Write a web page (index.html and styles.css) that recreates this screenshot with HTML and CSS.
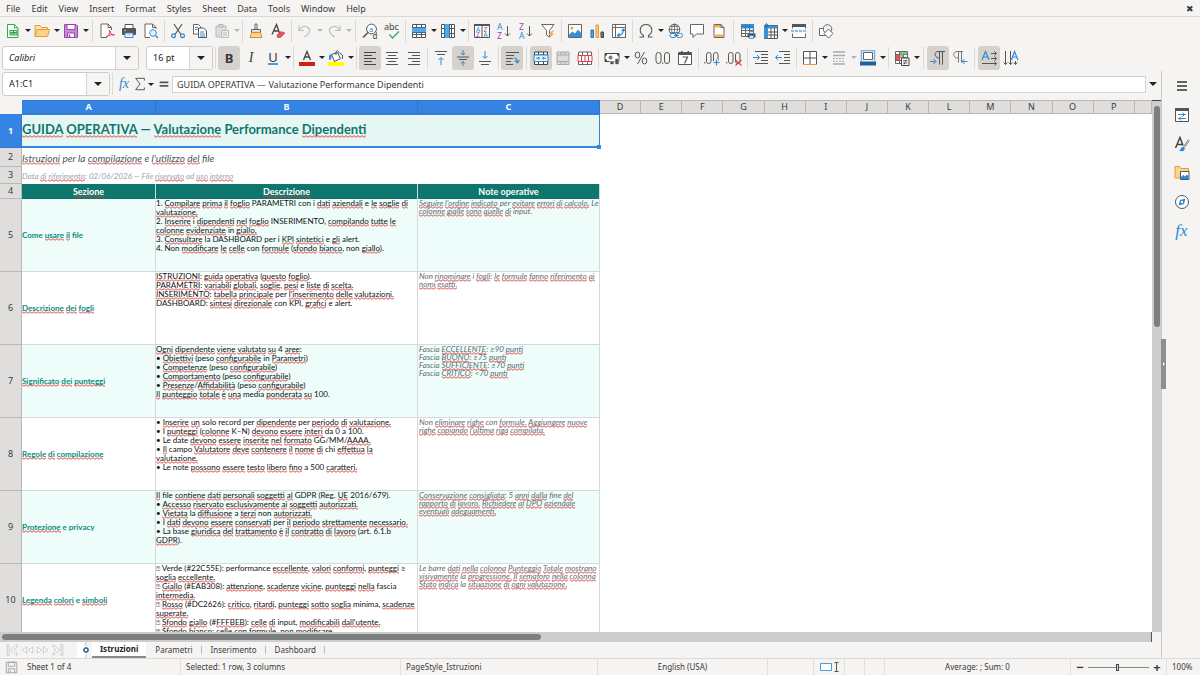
FILE: index.html
```
<!DOCTYPE html>
<html lang="it">
<head>
<meta charset="utf-8">
<title>Valutazione Performance Dipendenti</title>
<link rel="stylesheet" href="styles.css">
</head>
<body>
<svg class="sprite" aria-hidden="true">
  <symbol id="new" viewBox="0 0 16 16"><path d="M2.500 1.500h7l3.500 3.500v9.500h-10.500z" fill="#fff" stroke="#36a852"/><path d="M9.500 1.500v3.500h3.500" fill="none" stroke="#36a852"/><path d="M4.500 7h8v5.500h-8z" fill="#36a852"/><path d="M5.500 8.500h2.500M9 8.500h2.500M5.500 11h2.500M9 11h2.500" stroke="#c8efd0"/></symbol>
  <symbol id="open" viewBox="0 0 16 16"><path d="M1 13.500v-11h5l1.500 2h6v2" fill="#fbe3b5" stroke="#e89a35"/><path d="M1 13.500l2-7h12.500l-2 7z" fill="#fad38e" stroke="#e89a35"/></symbol>
  <symbol id="save" viewBox="0 0 16 16"><path d="M1.500 1.500h11.500l1.500 1.500v11.500h-13z" fill="#c98adb" stroke="#9b45b5"/><path d="M4 1.500h8v5h-8z" fill="#fff" stroke="#9b45b5"/><path d="M4.500 14.500v-4.500h7v4.500z" fill="#fff" stroke="#9b45b5"/><path d="M6.500 11.500v3" stroke="#9b45b5" stroke-width="1.500"/></symbol>
  <symbol id="pdf" viewBox="0 0 16 16"><path d="M12.500 7v-2.500l-3.500-3.500h-7v13.500h6" fill="#fff" stroke="#666"/><path d="M9 1v3.500h3.500" fill="none" stroke="#666"/><path d="M7 14c3-1 4-4 3.500-6-.5-1.500 0-1.500.5 0 .5 2.500 2 4.500 4.500 4-2-1-6 0-8 2z" fill="none" stroke="#d8434e"/></symbol>
  <symbol id="print" viewBox="0 0 16 16"><path d="M4 1.500h8v4h-8z" fill="#fff" stroke="#555"/><rect x="1" y="5" width="14" height="7" rx="1" fill="#555"/><path d="M4 10h8v4.500h-8z" fill="#fff" stroke="#3b82c4"/><path d="M3 7.500h2M5.500 12h5" stroke="#9bc7ec"/></symbol>
  <symbol id="preview" viewBox="0 0 16 16"><path d="M13 6v-1.500l-3.500-3.500h-7.500v13.500h5" fill="#fff" stroke="#666"/><path d="M9.500 1v3.500h3.500" fill="none" stroke="#666"/><circle cx="10" cy="10" r="3.300" fill="#e6f2fb" stroke="#3b8fd4"/><path d="M12.500 12.500l2.500 2.500" stroke="#3b8fd4" stroke-width="1.500"/></symbol>
  <symbol id="cut" viewBox="0 0 16 16"><path d="M4 1l7 10.500M12 1l-7 10.500" stroke="#555" stroke-width="1.200"/><circle cx="3.500" cy="12.800" r="1.900" fill="none" stroke="#2f88d0" stroke-width="1.200"/><circle cx="12.500" cy="12.800" r="1.900" fill="none" stroke="#2f88d0" stroke-width="1.200"/></symbol>
  <symbol id="copy" viewBox="0 0 16 16"><path d="M1.500 1.500h5l2 2v7.500h-7z" fill="#fff" stroke="#666"/><path d="M6.500 5h5l3 3v6.500h-8z" fill="#fff" stroke="#555"/><path d="M3 4.500h3M3 6.500h2.500M8 9h4M8 11h5M8 13h5" stroke="#3b8fd4"/></symbol>
  <symbol id="paste" viewBox="0 0 16 16"><path d="M2 3h10v11h-10z" fill="#ddd" stroke="#bbb"/><path d="M5 1.500h4v2.500h-4z" fill="#eee" stroke="#aaa"/><path d="M7.500 7.500h7v7h-7z" fill="#eee" stroke="#bbb"/><path d="M9 10h4M9 12h4" stroke="#bbb"/></symbol>
  <symbol id="clone" viewBox="0 0 16 16"><path d="M7 1h2v5h-2z" fill="#fff" stroke="#666"/><path d="M3.500 9.500v-3h9v3z" fill="#ddd" stroke="#666"/><path d="M3.500 9.500c0 2-1 3-1.500 5h12l-1.500-5z" fill="#fbd394" stroke="#e08a1e"/></symbol>
  <symbol id="clear" viewBox="0 0 16 16"><path d="M2 11.500l4.500-10 3.500 10M3.500 8h5" fill="none" stroke="#444" stroke-width="1.300"/><path d="M7 12l4-3.500 4 1.500-4.500 4.500h-3z" fill="#e5545e" stroke="#c9303c" stroke-width=".6"/></symbol>
  <symbol id="undo" viewBox="0 0 16 16"><path d="M2 2.500v5h5M2.500 7c2-3.500 6-5 9-2 3 3 0 6-4 9" fill="none" stroke="#bbb" stroke-width="1.100"/></symbol>
  <symbol id="redo" viewBox="0 0 16 16"><path d="M14 2.500v5h-5M13.500 7c-2-3.500-6-5-9-2-3 3 0 6 4 9" fill="none" stroke="#bbb" stroke-width="1.100"/></symbol>
  <symbol id="find" viewBox="0 0 16 16"><circle cx="9.500" cy="6" r="4.900" fill="#fff" stroke="#555"/><path d="M6 9.500l-5 5" stroke="#555" stroke-width="1.600"/><text x="7" y="8.500" font-size="7.500" fill="#2f88d0" class="glyph">a</text><text x="10.500" y="15.800" font-size="8" fill="#444" class="glyph">d</text></symbol>
  <symbol id="spell" viewBox="0 0 16 16"><text x="0" y="7" font-size="9" fill="#444" class="glyph">abc</text><path d="M5.500 11.500l3 3.500 6.500-6.500" fill="none" stroke="#36a866" stroke-width="1.300"/></symbol>
  <symbol id="row" viewBox="0 0 16 16"><path d="M1.500 1.500h13v13h-13zM1.500 11.500h13M5.500 1.500v13M10.500 1.500v13" fill="#fff" stroke="#555"/><path d="M1 5h14v4h-14z" fill="#55a8e4"/><path d="M1 4.500h14M1 9.500h14" stroke="#2372ae"/></symbol>
  <symbol id="col" viewBox="0 0 16 16"><path d="M1.500 1.500h13v13h-13zM1.500 5.500h13M1.500 10.500h13M11.500 1.500v13" fill="#fff" stroke="#555"/><path d="M5 1h4v14h-4z" fill="#55a8e4"/><path d="M4.500 1v14M9.500 1v14" stroke="#2372ae"/></symbol>
  <symbol id="sort" viewBox="0 0 16 16"><path d="M.5 1.500h15v13h-15zM8 2v12" fill="#fff" stroke="#555"/><path d="M0 2h16" stroke="#555" stroke-width="2"/><g class="glyph" font-size="6.500"><text x="2" y="8.500" fill="#2f88d0">A</text><text x="2" y="14" fill="#a63dbb">Z</text><text x="9.500" y="8.500" fill="#a63dbb">Z</text><text x="9.500" y="14" fill="#2f88d0">A</text></g></symbol>
  <symbol id="az" viewBox="0 0 16 16"><g class="glyph" font-size="8.500"><text x="1" y="7" fill="#2f88d0">A</text><text x="1" y="15.500" fill="#a63dbb">Z</text></g><path d="M11.500 3v10M9 10.500l2.500 2.500 2.500-2.500" fill="none" stroke="#555"/></symbol>
  <symbol id="za" viewBox="0 0 16 16"><g class="glyph" font-size="8.500"><text x="1" y="7" fill="#a63dbb">Z</text><text x="1" y="15.500" fill="#2f88d0">A</text></g><path d="M11.500 3v10M9 10.500l2.500 2.500 2.500-2.500" fill="none" stroke="#555"/></symbol>
  <symbol id="filter" viewBox="0 0 16 16"><path d="M1.500 1.500h12.500l-4.500 6v6.500l-3-2v-4.500z" fill="#fff" stroke="#666"/><path d="M12 7.500l-3.500 4.500h2l-1 3.500 4.500-5h-2l2-3z" fill="#f4ae52"/></symbol>
  <symbol id="image" viewBox="0 0 16 16"><path d="M1.500 1.500h13v13h-13z" fill="#fff" stroke="#666"/><circle cx="5" cy="5" r="1.500" fill="#f2a43c"/><path d="M2 14v-2.500l3.500-3 2.500 2 3-4 3.500 4v3.500z" fill="#3b8fd4"/></symbol>
  <symbol id="chart" viewBox="0 0 16 16"><path d="M2 7h2.500v7.500h-2.500z" fill="#58a6df" stroke="#2372ae"/><path d="M7 2h2.500v12.500h-2.500z" fill="#fbc778" stroke="#e89a35"/><path d="M12 9h2.500v5.500h-2.500z" fill="#777" stroke="#444"/></symbol>
  <symbol id="pivot" viewBox="0 0 16 16"><path d="M1.500 1.500h13v13h-13zM1.500 4.500h13M4.500 1.500v13" fill="#fff" stroke="#666"/><path d="M6.500 12.500c4 0 6-2 6-6M10.500 8l2-2 2 2M8.500 10.500l-2 2 2 2" fill="none" stroke="#2f88d0" stroke-width="1.200"/></symbol>
  <symbol id="omega" viewBox="0 0 16 16"><path d="M1.500 14h4v-1.500c-6-4-3-11 2.500-11s8.500 7 2.500 11v1.500h4" fill="none" stroke="#555" stroke-width="1.100"/></symbol>
  <symbol id="link" viewBox="0 0 16 16"><circle cx="7.500" cy="6.500" r="5.300" fill="#fff" stroke="#555"/><path d="M2 6.500h11M7.500 1v11M3 3.500h9M3 9.500h9M7.500 1c-4 3-4 8 0 11M7.500 1c4 3 4 8 0 11" fill="none" stroke="#555" stroke-width=".7"/><rect x="3" y="10.500" width="6" height="4" rx="2" fill="#fff" stroke="#2f88d0"/><rect x="9.500" y="10.500" width="6" height="4" rx="2" fill="#fff" stroke="#2f88d0"/><path d="M7 12.500h5" stroke="#2f88d0"/></symbol>
  <symbol id="comment" viewBox="0 0 16 16"><path d="M1.500 1.500h13v9.500h-7l-3.500 3.500v-3.500h-2.500z" fill="#fff" stroke="#666"/></symbol>
  <symbol id="headfoot" viewBox="0 0 16 16"><path d="M3 1.500h7l3 3v10h-10z" fill="#fff" stroke="#666"/><path d="M3.500 2h6.500v2.500h-6.500zM3.500 11.500h9v2.500h-9z" fill="#f4ae52"/><path d="M10 1.500v3h3" fill="none" stroke="#666"/></symbol>
  <symbol id="prange" viewBox="0 0 16 16"><path d="M1.500 1.500h12v12h-12zM1.500 7.500h12M1.500 10.500h12M5.500 4v9.500M9.500 4v9.500" fill="#fff" stroke="#666"/><path d="M1 1h13v4.500h-13z" fill="#3b8fd4"/><path d="M1 3.500h13M5.500 1v4.500M9.500 1v4.500" stroke="#2372ae" stroke-width=".7"/><path d="M7.500 10.500h8v4h-8z" fill="#555"/><path d="M9.500 8.500h4v2h-4zM9.500 12.500h4v3h-4z" fill="#d9ecfa" stroke="#2f78b5" stroke-width=".7"/></symbol>
  <symbol id="freeze" viewBox="0 0 16 16"><path d="M2.500 2.500h13v13h-13zM2.500 9h13M2.500 12h13M9 2.500v13M12.500 2.500v13" fill="#fff" stroke="#555"/><path d="M2 2.500h13.500v3h-13.500zM2 2h4v13.500h-4z" fill="#3b8fd4"/><path d="M4.500 0v5M2 2.500h5M3 1l3 3M6 1l-3 3" stroke="#2372ae" stroke-width=".8"/></symbol>
  <symbol id="split" viewBox="0 0 16 16"><path d="M1.500 5.500v-4h13v4M1.500 10.500v4h13v-4" fill="#fff" stroke="#666"/><path d="M1 2.500h14" stroke="#555" stroke-width="3"/><path d="M0 8h16" stroke="#2f88d0" stroke-dasharray="3 1"/></symbol>
  <symbol id="shapes" viewBox="0 0 16 16"><path d="M1.500 5.500h7v7h-7z" fill="#fff" stroke="#666"/><circle cx="9.500" cy="6" r="4.300" fill="#f5f4f2" stroke="#666"/><path d="M10.500 6l4.500 4.500-4.500 4.500-4.500-4.500z" fill="#fff" stroke="#666"/></symbol>

  <symbol id="fcolor" viewBox="0 0 16 16"><path d="M4.500 10l3.500-8.500 3.500 8.500M5.700 7h4.600" fill="none" stroke="#444" stroke-width="1.300"/><path d="M0 12h16v4h-16z" fill="#c9211e"/></symbol>
  <symbol id="fill" viewBox="0 0 16 16"><path d="M3.500 4.500l6-2 3 6-6 3z" fill="#fff" stroke="#555"/><path d="M8 5v-3.500c2-1.500 3 0 3 2M12 3l2.500 2v4" fill="none" stroke="#555"/><path d="M1 10v-4.500l3-2-1 6z" fill="#2f88d0"/><path d="M0 12h16v4h-16z" fill="#ff0"/></symbol>
  <symbol id="aleft" viewBox="0 0 16 16"><path d="M2 2.500h12M2 5.500h8M2 8.500h12M2 11.500h8M2 14.500h12" stroke="#444"/></symbol>
  <symbol id="acenter" viewBox="0 0 16 16"><path d="M2 2.500h12M4 5.500h8M2 8.500h12M4 11.500h8M2 14.500h12" stroke="#555"/></symbol>
  <symbol id="aright" viewBox="0 0 16 16"><path d="M2 2.500h12M6 5.500h8M2 8.500h12M6 11.500h8M2 14.500h12" stroke="#555"/></symbol>
  <symbol id="vtop" viewBox="0 0 16 16"><path d="M2 1.500h12M4 4.500h8" stroke="#555"/><path d="M8 15v-7M5.500 10l2.500-2.500 2.500 2.500" fill="none" stroke="#2f88d0"/></symbol>
  <symbol id="vmid" viewBox="0 0 16 16"><path d="M2 7h12M4 9.500h8" stroke="#555"/><path d="M8 0v5M6 3l2 2 2-2M8 16v-4.500M6 13.500l2-2 2 2" fill="none" stroke="#2f88d0"/></symbol>
  <symbol id="vbot" viewBox="0 0 16 16"><path d="M2 11.500h12M4 14.500h8" stroke="#555"/><path d="M8 1v7M5.500 6l2.500 2.500 2.500-2.500" fill="none" stroke="#2f88d0"/></symbol>
  <symbol id="wrap" viewBox="0 0 16 16"><path d="M2 2.500h13M2 5.500h8M2 8.500h7M2 11.500h5M2 14.500h7" stroke="#555"/><path d="M10 8c2 0 3 1 3.500 4M11 10.500l2.500 2.500 2-3" fill="none" stroke="#2f88d0" stroke-width="1.100"/></symbol>
  <symbol id="mergec" viewBox="0 0 16 16"><path d="M1.500 2h13v12.500h-13zM1.500 5h13M1.500 11.500h13M5.500 2v3M10.500 2v3M5.500 11.500v3M10.500 11.500v3" fill="#fff" stroke="#444"/><path d="M1 5h14v6.500h-14z" fill="#e6f2fb" stroke="#2f88d0"/><path d="M3 8.200h3.500M9.500 8.200h3.500M5 7l1.500 1.200-1.500 1.200M11 7l-1.500 1.200 1.500 1.200" fill="none" stroke="#2f88d0"/></symbol>
  <symbol id="merge" viewBox="0 0 16 16"><path d="M2 2h12v12.500h-12zM2 5h12M2 11.500h12M6 2v3M10 2v3M6 11.500v3M10 11.500v3" fill="#ddd" stroke="#aaa"/></symbol>
  <symbol id="unmerge" viewBox="0 0 16 16"><path d="M1.500 2h13v12.500h-13zM5.500 2v12.500M10.500 2v12.500" fill="#fff" stroke="#666"/><path d="M1 5.500h14v6h-14zM4.500 5.500v6M8 5.500v6M11.500 5.500v6" fill="#fff" stroke="#d8434e"/></symbol>
  <symbol id="currency" viewBox="0 0 16 16"><path d="M1 3.500h14v8h-14z" fill="#fff" stroke="#444"/><path d="M1 3.500h2v2h-2zM13 3.500h2v2h-2zM1 9.500h2v2h-2z" fill="#444"/><circle cx="6.500" cy="7.500" r="2" fill="#777"/><path d="M6 11h4v3.500h-4zM11 8.500h4v6h-4z" fill="#555" stroke="#fff" stroke-width=".6"/></symbol>
  <symbol id="percent" viewBox="0 0 16 16"><ellipse cx="4.500" cy="5" rx="2.300" ry="3" fill="none" stroke="#555"/><ellipse cx="11.500" cy="11" rx="2.300" ry="3" fill="none" stroke="#555"/><path d="M11.500 2l-7 12" stroke="#555"/></symbol>
  <symbol id="number" viewBox="0 0 16 16"><rect x="1" y="2.500" width="5" height="11" rx="2.500" fill="none" stroke="#555"/><rect x="9.500" y="2.500" width="5" height="11" rx="2.500" fill="none" stroke="#555"/><path d="M7.700 12.500v1.500" stroke="#555"/></symbol>
  <symbol id="date" viewBox="0 0 16 16"><path d="M1.500 2.500h13v12h-13z" fill="#fff" stroke="#555"/><path d="M1 3h14v2h-14zM4 1h1.500v2h-1.500zM10.500 1h1.500v2h-1.500z" fill="#555"/><path d="M5.500 7h5l-3 6.500" fill="none" stroke="#555" stroke-width="1.200"/></symbol>
  <symbol id="adddec" viewBox="0 0 16 16"><path d="M.8 12v1.500" stroke="#555"/><rect x="2.500" y="2.500" width="4.500" height="11" rx="2.200" fill="none" stroke="#555"/><rect x="9.500" y="2.500" width="4.500" height="11" rx="2.200" fill="none" stroke="#555"/><path d="M9 12.500h7M12.500 9v7" stroke="#f5f4f2" stroke-width="3"/><path d="M9.500 12.500h6M12.500 9.500v6" stroke="#2f88d0" stroke-width="1.200"/></symbol>
  <symbol id="deldec" viewBox="0 0 16 16"><path d="M.8 12v1.500" stroke="#555"/><rect x="2.500" y="2.500" width="4.500" height="11" rx="2.200" fill="none" stroke="#555"/><rect x="9.500" y="2.500" width="4.500" height="11" rx="2.200" fill="none" stroke="#555"/><path d="M9.500 10l6 5.500M15.500 10l-6 5.500" stroke="#e0444e" stroke-width="1.200"/></symbol>
  <symbol id="indent" viewBox="0 0 16 16"><path d="M2 1.500h13M8 4.500h7M8 7.500h7M8 10.500h7M2 13.500h13" stroke="#555"/><path d="M0 7.500h6.500M4 5l2.500 2.500-2.500 2.500" fill="none" stroke="#2f88d0"/></symbol>
  <symbol id="outdent" viewBox="0 0 16 16"><path d="M4 1.500h11M9 4.500h6M9 7.500h6M9 10.500h6M4 13.500h11" stroke="#555"/><path d="M7 7.500h-6.500M3 5l-2.500 2.500 2.500 2.500" fill="none" stroke="#2f88d0"/></symbol>
  <symbol id="borders" viewBox="0 0 16 16"><path d="M1.500 14v-12.500h13v12.500M8 1.500v13M1.500 8h13" fill="#fff" stroke="#555"/><path d="M1 14.500h14" stroke="#e89a35"/></symbol>
  <symbol id="lstyle" viewBox="0 0 16 16"><path d="M2 2h12M2 5.500h12M2 14h12" stroke="#aaa" stroke-width="1.500"/><path d="M2 8.500h12M2 11.200h12" stroke="#aaa" stroke-dasharray="2 1"/></symbol>
  <symbol id="lcolor" viewBox="0 0 16 16"><path d="M3.500 2.500h9v7h-9z" fill="#fff" stroke="#666"/><path d="M1.500 11v-10.500h13v10.500" fill="none" stroke="#7fb4e0" stroke-width="1.500"/><path d="M0 11.500h16v4h-16z" fill="#245f9e"/></symbol>
  <symbol id="cond" viewBox="0 0 16 16"><path d="M1.500 1.500h12v12h-12zM1.500 4.500h12M1.500 7.500h12M1.500 10.500h12M5.500 1.500v12M9.500 1.500v12" fill="#fff" stroke="#666"/><path d="M6 2h7v2.500h-7z" fill="#6ccf85"/><path d="M2 5h3.500v5.500h-3.500z" fill="#e5545e"/><path d="M6 5h3v2.500h-3z" fill="#f4ae52"/><path d="M7.500 8h7.500v7.500h-7.500z" fill="#fff" stroke="#444"/><path d="M9 10.700h4.500M9 13h4.500M12.500 9.500l-2.500 5" stroke="#444" stroke-width=".8"/></symbol>
  <symbol id="ltr" viewBox="0 0 16 16"><path d="M15 1.500h-7c-4 0-4 6.500 1.500 6.500M9.500 1.500v13M12.500 1.500v13" fill="none" stroke="#555"/><path d="M0 11.500h5.500M3.500 9l2.500 2.500-2.500 2.500" fill="none" stroke="#2f88d0"/></symbol>
  <symbol id="rtl" viewBox="0 0 16 16"><path d="M11 1.500h-6c-4.500 0-4.500 6.500 1 6.500M6.500 1.500v11M9.500 1.500v11" fill="none" stroke="#777"/><path d="M15.500 11.500h-5.500M12.500 9l-2.500 2.500 2.500 2.500" fill="none" stroke="#2f88d0"/></symbol>
  <symbol id="thoriz" viewBox="0 0 16 16"><path d="M1 10l3.500-8.500 3.500 8.500M2.300 7h4.500" fill="none" stroke="#2f88d0" stroke-width="1.200"/><path d="M10 3.500h5M10 8.500h5M1 13.500h14M13.500 1.500l2 2-2 2M13.500 6.500l2 2-2 2M13.500 11.500l2 2-2 2" fill="none" stroke="#555"/></symbol>
  <symbol id="tvert" viewBox="0 0 16 16"><path d="M8.500 10l3-8.500 3.500 8.500M9.800 7h4.200" fill="none" stroke="#2f88d0" stroke-width="1.200"/><path d="M2.500 1v13.500M7.500 1v13.500M12.500 11v3.500M.7 12.500l1.800 2 1.800-2M5.700 12.500l1.800 2 1.800-2M10.700 12.500l1.800 2 1.800-2" fill="none" stroke="#555"/></symbol>

  <symbol id="sigma" viewBox="0 0 16 16"><path d="M13 4v-2.500h-10l5 6.500-5 6.500h10v-2.500" fill="none" stroke="#555" stroke-width="1.100"/></symbol>
  <symbol id="equals" viewBox="0 0 16 16"><path d="M3 6h10M3 10h10" stroke="#555" stroke-width="2"/></symbol>
  <symbol id="menu" viewBox="0 0 16 16"><path d="M3 4h10M3 8h10M3 12h10" stroke="#333" stroke-width="1.500"/></symbol>
  <symbol id="props" viewBox="0 0 16 16"><path d="M1.500 1.500h13v13h-13z" fill="#fff" stroke="#555"/><path d="M1 2.500h14" stroke="#555" stroke-width="3"/><path d="M4 7.500h8M4 11.500h8M8.500 5.500l2 2-2 2M7 9.500l-2 2 2 2" fill="none" stroke="#2f88d0"/></symbol>
  <symbol id="styles" viewBox="0 0 16 16"><path d="M1.500 12l4.500-10.500 3 8M3 8.500h5.500" fill="none" stroke="#444" stroke-width="1.500"/><path d="M15 4l-5 7" stroke="#666" stroke-width="2"/><path d="M15 4l-5 7" stroke="#fff" stroke-width=".7"/><path d="M4.500 14.500c2.500 0 2-3.500 4.500-3.500s2.500 4-1 4.300z" fill="#2f88d0"/></symbol>
  <symbol id="gallery" viewBox="0 0 16 16"><path d="M1 13v-11.500h4.500l1.500 2h7.500v9.500z" fill="#fad38e" stroke="#e89a35"/><path d="M6.500 6.500h8.500v8h-8.500z" fill="#fff" stroke="#555"/><path d="M7 14v-2l2.500-2 1.500 1.500 2-2 1.500 2v2.500z" fill="#2f88d0"/></symbol>
  <symbol id="navig" viewBox="0 0 16 16"><circle cx="8" cy="8" r="6.500" fill="#fff" stroke="#555"/><path d="M11.500 4.500l-1.500 5.500-5.500 1.500 1.500-5.500z" fill="#2f88d0"/><circle cx="8" cy="8" r="1.200" fill="#fff"/></symbol>
  <symbol id="first" viewBox="0 0 16 16"><path d="M2 2h2v12h-2zM13 2l-7 6 7 6v-3l-3.500-3 3.500-3z" fill="#fff" stroke="#b8b8b8" stroke-width=".8"/></symbol>
  <symbol id="prev" viewBox="0 0 16 16"><path d="M7 4.500l-5 3.500 5 3.500zM14 4.500l-5 3.500 5 3.500z" fill="#fff" stroke="#b8b8b8" stroke-width=".8"/></symbol>
  <symbol id="next" viewBox="0 0 16 16"><path d="M9 4.500l5 3.500-5 3.500zM2 4.500l5 3.500-5 3.500z" fill="#fff" stroke="#b8b8b8" stroke-width=".8"/></symbol>
  <symbol id="last" viewBox="0 0 16 16"><path d="M12 2h2v12h-2zM3 2l7 6-7 6v-3l3.500-3-3.500-3z" fill="#fff" stroke="#b8b8b8" stroke-width=".8"/></symbol>
  <symbol id="addsheet" viewBox="0 0 16 16"><path d="M1 0h9v16h-9z" fill="#fff"/><path d="M10 0v4M10 12v4M8 2.500l2-1" stroke="#ccc"/><circle cx="10" cy="8" r="2" fill="#fff" stroke="#3465a4" stroke-width="1.500"/><path d="M10 5v1.500M10 9.500v1.500M7 8h1.500M11.500 8h1.500" stroke="#3465a4"/></symbol>
  <symbol id="disk" viewBox="0 0 16 16"><path d="M1.500 1.500h13v13h-13zM4 1.500h8v5h-8zM4 14.500v-5h8v5M6.500 11v3" fill="#f5f4f2" stroke="#999"/></symbol>
  <symbol id="selmode" viewBox="0 0 22 12"><path d="M1.500 2.500h11v7h-11z" fill="#fff" stroke="#4a9bd8"/><path d="M15.500 1.500h4M17.500 1v10M15.500 10.500h4" stroke="#555"/></symbol>
</svg>

<nav class="menubar">
  <button>File</button><button>Edit</button><button>View</button><button>Insert</button><button>Format</button><button>Styles</button><button>Sheet</button><button>Data</button><button>Tools</button><button>Window</button><button>Help</button>
  <button class="close" aria-label="Close document">✖</button>
</nav>

<div class="toolbar" role="toolbar" aria-label="Standard">
  <button aria-label="New"><svg><use href="#new"/></svg></button><button class="drop" aria-label="New options"></button>
  <button aria-label="Open"><svg><use href="#open"/></svg></button><button class="drop" aria-label="Recent"></button>
  <button aria-label="Save"><svg><use href="#save"/></svg></button><button class="drop" aria-label="Save options"></button>
  <i class="sep wide"></i>
  <button aria-label="Export PDF"><svg><use href="#pdf"/></svg></button>
  <button aria-label="Print"><svg><use href="#print"/></svg></button>
  <button aria-label="Print preview"><svg><use href="#preview"/></svg></button>
  <i class="sep"></i>
  <button aria-label="Cut"><svg><use href="#cut"/></svg></button>
  <button aria-label="Copy"><svg><use href="#copy"/></svg></button>
  <button aria-label="Paste"><svg><use href="#paste"/></svg></button><button class="drop off" aria-label="Paste options"></button>
  <i class="sep"></i>
  <button aria-label="Clone formatting"><svg><use href="#clone"/></svg></button>
  <button aria-label="Clear formatting"><svg><use href="#clear"/></svg></button>
  <i class="sep"></i>
  <button aria-label="Undo"><svg><use href="#undo"/></svg></button><button class="drop off" aria-label="Undo list"></button>
  <button aria-label="Redo"><svg><use href="#redo"/></svg></button><button class="drop off" aria-label="Redo list"></button>
  <i class="sep wide"></i>
  <button aria-label="Find and replace"><svg><use href="#find"/></svg></button>
  <button aria-label="Spelling"><svg><use href="#spell"/></svg></button>
  <i class="sep"></i>
  <button aria-label="Row"><svg><use href="#row"/></svg></button><button class="drop" aria-label="Row options"></button>
  <button aria-label="Column"><svg><use href="#col"/></svg></button><button class="drop" aria-label="Column options"></button>
  <i class="sep"></i>
  <button aria-label="Sort"><svg><use href="#sort"/></svg></button>
  <button aria-label="Sort ascending"><svg><use href="#az"/></svg></button>
  <button aria-label="Sort descending"><svg><use href="#za"/></svg></button>
  <button aria-label="AutoFilter"><svg><use href="#filter"/></svg></button>
  <i class="sep"></i>
  <button aria-label="Image"><svg><use href="#image"/></svg></button>
  <button aria-label="Chart"><svg><use href="#chart"/></svg></button>
  <button aria-label="Pivot table"><svg><use href="#pivot"/></svg></button>
  <i class="sep"></i>
  <button aria-label="Special character"><svg><use href="#omega"/></svg></button><button class="drop" aria-label="More characters"></button>
  <button aria-label="Hyperlink"><svg><use href="#link"/></svg></button>
  <button aria-label="Comment"><svg><use href="#comment"/></svg></button>
  <button aria-label="Headers and footers"><svg><use href="#headfoot"/></svg></button>
  <i class="sep wide"></i>
  <button aria-label="Print area"><svg><use href="#prange"/></svg></button>
  <button aria-label="Freeze"><svg><use href="#freeze"/></svg></button><button class="drop" aria-label="Freeze options"></button>
  <button aria-label="Split window"><svg><use href="#split"/></svg></button>
  <i class="sep"></i>
  <button aria-label="Draw functions"><svg><use href="#shapes"/></svg></button>
</div>

<div class="toolbar format" role="toolbar" aria-label="Formatting">
  <div class="combo font"><input aria-label="Font name" value="Calibri"><button aria-label="Font list"></button></div>
  <div class="combo size"><input aria-label="Font size" value="16 pt"><button aria-label="Size list"></button></div>
  <i class="sep"></i>
  <button class="on bold">B</button>
  <button class="italic">I</button>
  <button class="under"><span>U</span></button><button class="drop" aria-label="Underline options"></button>
  <i class="sep"></i>
  <button aria-label="Font color"><svg><use href="#fcolor"/></svg></button><button class="drop" aria-label="Font colors"></button>
  <button aria-label="Background"><svg><use href="#fill"/></svg></button><button class="drop" aria-label="Background colors"></button>
  <i class="sep"></i>
  <button class="on" aria-label="Align left"><svg><use href="#aleft"/></svg></button>
  <button aria-label="Center"><svg><use href="#acenter"/></svg></button>
  <button aria-label="Align right"><svg><use href="#aright"/></svg></button>
  <i class="sep"></i>
  <button aria-label="Top"><svg><use href="#vtop"/></svg></button>
  <button class="on" aria-label="Middle"><svg><use href="#vmid"/></svg></button>
  <button aria-label="Bottom"><svg><use href="#vbot"/></svg></button>
  <i class="sep"></i>
  <button class="on" aria-label="Wrap text"><svg><use href="#wrap"/></svg></button>
  <i class="sep wide"></i>
  <button class="on" aria-label="Merge and center"><svg><use href="#mergec"/></svg></button>
  <button aria-label="Merge"><svg><use href="#merge"/></svg></button>
  <button aria-label="Unmerge"><svg><use href="#unmerge"/></svg></button>
  <i class="sep"></i>
  <button aria-label="Currency"><svg><use href="#currency"/></svg></button><button class="drop" aria-label="Currencies"></button>
  <button aria-label="Percent"><svg><use href="#percent"/></svg></button>
  <button aria-label="Number"><svg><use href="#number"/></svg></button>
  <button aria-label="Date"><svg><use href="#date"/></svg></button>
  <i class="sep"></i>
  <button aria-label="Add decimal"><svg><use href="#adddec"/></svg></button>
  <button aria-label="Delete decimal"><svg><use href="#deldec"/></svg></button>
  <i class="sep"></i>
  <button aria-label="Increase indent"><svg><use href="#indent"/></svg></button>
  <button aria-label="Decrease indent"><svg><use href="#outdent"/></svg></button>
  <i class="sep"></i>
  <button aria-label="Borders"><svg><use href="#borders"/></svg></button><button class="drop" aria-label="Border options"></button>
  <button aria-label="Border style"><svg><use href="#lstyle"/></svg></button><button class="drop off" aria-label="Border styles"></button>
  <button aria-label="Border color"><svg><use href="#lcolor"/></svg></button><button class="drop" aria-label="Border colors"></button>
  <i class="sep"></i>
  <button aria-label="Conditional"><svg><use href="#cond"/></svg></button><button class="drop" aria-label="Conditional options"></button>
  <i class="sep wide"></i>
  <button class="on" aria-label="Left to right"><svg><use href="#ltr"/></svg></button>
  <button aria-label="Right to left"><svg><use href="#rtl"/></svg></button>
  <i class="sep wide"></i>
  <button class="on" aria-label="Horizontal text"><svg><use href="#thoriz"/></svg></button>
  <button aria-label="Vertical text"><svg><use href="#tvert"/></svg></button>
</div>

<main class="work">
  <section class="document">
    <div class="formula">
      <div class="combo name"><input aria-label="Name box" value="A1:C1"><button aria-label="Named ranges"></button></div>
      <i class="sep"></i>
      <button class="fx" aria-label="Function wizard">fx</button>
      <button class="narrow" aria-label="Sum"><svg><use href="#sigma"/></svg></button><button class="drop" aria-label="Functions"></button>
      <button class="narrow" aria-label="Formula"><svg><use href="#equals"/></svg></button>
      <input class="content" aria-label="Formula" value="GUIDA OPERATIVA — Valutazione Performance Dipendenti">
      <button class="expand drop" aria-label="Expand"></button>
    </div>

    <div class="viewport">
      <div class="cells">
        <table>
          <colgroup><col class="c-num"><col class="c-a"><col class="c-b"><col class="c-c"><col><col><col><col><col><col><col><col><col><col><col><col><col><col class="c-end"></colgroup>
          <thead>
            <tr><th class="corner"></th><th class="sel">A</th><th class="sel">B</th><th class="sel">C</th><th>D</th><th>E</th><th>F</th><th>G</th><th>H</th><th>I</th><th>J</th><th>K</th><th>L</th><th>M</th><th>N</th><th>O</th><th>P</th><th></th></tr>
          </thead>
          <tbody>
            <tr class="r1"><th class="sel">1</th><td colspan="3" class="title"><u>GUIDA</u> <u>OPERATIVA</u> — <u>Valutazione</u> Performance <u>Dipendenti</u><span class="handle"></span></td><td class="blank" colspan="14" rowspan="10"></td></tr>
            <tr class="r2"><th>2</th><td colspan="3" class="subtitle"><u>Istruzioni</u> per la <u>compilazione</u> e <u>l'utilizzo</u> <u>del</u> file</td></tr>
            <tr class="r3"><th>3</th><td colspan="3" class="dated">Data <u>di</u> <u>riferimento</u>: 02/06/2026 — File <u>riservato</u> ad <u>uso</u> <u>interno</u></td></tr>
            <tr class="r4"><th>4</th><td><u>Sezione</u></td><td><u>Descrizione</u></td><td>Note operative</td></tr>
            <tr class="row tint"><th>5</th><td class="label">Come <u>usare</u> <u>il</u> file</td>
              <td class="desc">1. <u>Compilare</u> <u>prima</u> <u>il</u> <u>foglio</u> PARAMETRI con i <u>dati</u> <u>aziendali</u> e <u>le</u> <u>soglie</u> <u>di</u><br><u>valutazione.</u><br>2. <u>Inserire</u> i <u>dipendenti</u> <u>nel</u> <u>foglio</u> INSERIMENTO, <u>compilando</u> <u>tutte</u> <u>le</u><br><u>colonne</u> <u>evidenziate</u> in <u>giallo.</u><br>3. <u>Consultare</u> la DASHBOARD per i <u>KPI</u> <u>sintetici</u> e <u>gli</u> alert.<br>4. Non <u>modificare</u> <u>le</u> <u>celle</u> con <u>formule</u> (<u>sfondo</u> <u>bianco</u>, non <u>giallo</u>).</td>
              <td class="note"><u>Seguire</u> <u>l'ordine</u> <u>indicato</u> per <u>evitare</u> <u>errori</u> <u>di</u> <u>calcolo.</u> Le<br><u>colonne</u> <u>gialle</u> <u>sono</u> <u>quelle</u> <u>di</u> input.</td></tr>
            <tr class="row"><th>6</th><td class="label"><u>Descrizione</u> <u>dei</u> <u>fogli</u></td>
              <td class="desc"><u>ISTRUZIONI</u>: <u>guida</u> <u>operativa</u> (<u>questo</u> <u>foglio</u>).<br><u>PARAMETRI</u>: <u>variabili</u> <u>globali</u>, <u>soglie</u>, <u>pesi</u> e <u>liste</u> <u>di</u> <u>scelta.</u><br><u>INSERIMENTO</u>: <u>tabella</u> <u>principale</u> per <u>l'inserimento</u> <u>delle</u> <u>valutazioni.</u><br>DASHBOARD: <u>sintesi</u> <u>direzionale</u> con KPI, <u>grafici</u> e alert.</td>
              <td class="note">Non <u>rinominare</u> i <u>fogli</u>: <u>le</u> <u>formule</u> <u>fanno</u> <u>riferimento</u> <u>ai</u><br><u>nomi</u> <u>esatti.</u></td></tr>
            <tr class="row tint"><th>7</th><td class="label"><u>Significato</u> <u>dei</u> <u>punteggi</u></td>
              <td class="desc"><u>Ogni</u> <u>dipendente</u> <u>viene</u> <u>valutato</u> <u>su</u> 4 <u>aree</u>:<br>• <u>Obiettivi</u> (peso <u>configurabile</u> in <u>Parametri</u>)<br>• <u>Competenze</u> (peso <u>configurabile</u>)<br>• <u>Comportamento</u> (peso <u>configurabile</u>)<br>• <u>Presenze</u>/<u>Affidabilità</u> (peso <u>configurabile</u>)<br><u>Il</u> <u>punteggio</u> <u>totale</u> <u>è</u> <u>una</u> media <u>ponderata</u> <u>su</u> 100.</td>
              <td class="note">Fascia <u>ECCELLENTE</u>: ≥90 <u>punti</u><br>Fascia <u>BUONO</u>: ≥75 <u>punti</u><br>Fascia <u>SUFFICIENTE</u>: ≥70 <u>punti</u><br>Fascia <u>CRITICO</u>: &lt;70 <u>punti</u></td></tr>
            <tr class="row"><th>8</th><td class="label"><u>Regole</u> <u>di</u> <u>compilazione</u></td>
              <td class="desc">• <u>Inserire</u> <u>un</u> solo record per <u>dipendente</u> per <u>periodo</u> <u>di</u> <u>valutazione.</u><br>• I <u>punteggi</u> (<u>colonne</u> K–N) <u>devono</u> <u>essere</u> <u>interi</u> da 0 a 100.<br>• Le date <u>devono</u> <u>essere</u> <u>inserite</u> <u>nel</u> <u>formato</u> GG/MM/<u>AAAA.</u><br>• <u>Il</u> campo <u>Valutatore</u> <u>deve</u> <u>contenere</u> <u>il</u> <u>nome</u> <u>di</u> chi <u>effettua</u> <u>la</u><br><u>valutazione.</u><br>• Le note <u>possono</u> <u>essere</u> <u>testo</u> <u>libero</u> <u>fino</u> a 500 <u>caratteri.</u></td>
              <td class="note">Non <u>eliminare</u> <u>righe</u> con <u>formule.</u> <u>Aggiungere</u> <u>nuove</u><br><u>righe</u> <u>copiando</u> <u>l'ultima</u> <u>riga</u> <u>compilata.</u></td></tr>
            <tr class="row tint"><th>9</th><td class="label"><u>Protezione</u> e privacy</td>
              <td class="desc"><u>Il</u> file <u>contiene</u> <u>dati</u> <u>personali</u> <u>soggetti</u> <u>al</u> GDPR (Reg. <u>UE</u> 2016/679).<br>• <u>Accesso</u> <u>riservato</u> <u>esclusivamente</u> <u>ai</u> <u>soggetti</u> <u>autorizzati.</u><br>• <u>Vietata</u> la <u>diffusione</u> a <u>terzi</u> non <u>autorizzati.</u><br>• I <u>dati</u> <u>devono</u> <u>essere</u> <u>conservati</u> per <u>il</u> <u>periodo</u> <u>strettamente</u> <u>necessario.</u><br>• La base <u>giuridica</u> <u>del</u> <u>trattamento</u> <u>è</u> <u>il</u> <u>contratto</u> <u>di</u> <u>lavoro</u> (art. 6.1.b<br><u>GDPR</u>).</td>
              <td class="note"><u>Conservazione</u> <u>consigliata</u>: 5 <u>anni</u> <u>dalla</u> fine <u>del</u><br><u>rapporto</u> <u>di</u> <u>lavoro.</u> <u>Richiedere</u> <u>al</u> <u>DPO</u> <u>aziendale</u><br><u>eventuali</u> <u>adeguamenti.</u></td></tr>
            <tr class="row"><th>10</th><td class="label"><u>Legenda</u> <u>colori</u> e <u>simboli</u></td>
              <td class="desc"><b>⍰</b> Verde (#22C55E): performance <u>eccellente</u>, <u>valori</u> <u>conformi</u>, <u>punteggi</u> ≥<br><u>soglia</u> <u>eccellente.</u><br><b>⍰</b> <u>Giallo</u> (#EAB308): <u>attenzione</u>, <u>scadenze</u> <u>vicine</u>, <u>punteggi</u> <u>nella</u> fascia<br><u>intermedia.</u><br><b>⍰</b> <u>Rosso</u> (#DC2626): <u>critico</u>, <u>ritardi</u>, <u>punteggi</u> <u>sotto</u> <u>soglia</u> minima, <u>scadenze</u><br><u>superate.</u><br><b>⍰</b> <u>Sfondo</u> <u>giallo</u> (#<u>FFFBEB</u>): <u>celle</u> <u>di</u> input, <u>modificabili</u> <u>dall'utente.</u><br><b>⍰</b> <u>Sfondo</u> <u>bianco</u>: <u>celle</u> con <u>formule</u>, non <u>modificare.</u></td>
              <td class="note">Le barre <u>dati</u> <u>nella</u> <u>colonna</u> <u>Punteggio</u> <u>Totale</u> <u>mostrano</u><br><u>visivamente</u> la <u>progressione.</u> <u>Il</u> <u>semaforo</u> <u>nella</u> <u>colonna</u><br><u>Stato</u> <u>indica</u> la <u>situazione</u> <u>di</u> <u>ogni</u> <u>valutazione.</u></td></tr>
          </tbody>
        </table>
      </div>
      <div class="vscroll"><span></span></div>
    </div>
    <div class="hscroll"><span></span></div>

    <nav class="tabs">
      <div class="tabnav"><button aria-label="First sheet"><svg><use href="#first"/></svg></button><button aria-label="Previous sheet"><svg><use href="#prev"/></svg></button><button aria-label="Next sheet"><svg><use href="#next"/></svg></button><button aria-label="Last sheet"><svg><use href="#last"/></svg></button></div>
      <button class="add" aria-label="Add sheet"><svg><use href="#addsheet"/></svg></button>
      <button class="tab active">Istruzioni</button><button class="tab">Parametri</button><button class="tab">Inserimento</button><button class="tab">Dashboard</button>
    </nav>
  </section>

  <aside class="sidebar">
    <button class="grip" aria-label="Hide sidebar"></button>
    <button aria-label="Sidebar settings"><svg><use href="#menu"/></svg></button>
    <button aria-label="Properties"><svg><use href="#props"/></svg></button>
    <button aria-label="Styles"><svg><use href="#styles"/></svg></button>
    <button aria-label="Gallery"><svg><use href="#gallery"/></svg></button>
    <button aria-label="Navigator"><svg><use href="#navig"/></svg></button>
    <button class="fx" aria-label="Functions">fx</button>
  </aside>
</main>

<footer class="status">
  <span class="disk"><svg><use href="#disk"/></svg></span>
  <span>Sheet 1 of 4</span>
  <span>Selected: 1 row, 3 columns</span>
  <span>PageStyle_Istruzioni</span>
  <span class="mid">English (USA)</span>
  <span></span>
  <span class="mode"><svg><use href="#selmode"/></svg></span>
  <span></span>
  <span></span>
  <span class="mid">Average: ; Sum: 0</span>
  <span class="zoom"><button aria-label="Zoom out">−</button><input type="range" aria-label="Zoom" min="0" max="100" value="49"><button aria-label="Zoom in">+</button></span>
  <span>100%</span>
</footer>
</body>
</html>
```

FILE: styles.css
```
:root {
  --chrome: #f5f4f2;
  --line: #dcdad7;
  --text: #3a3a3a;
  --blue: #3584e4;
  --teal: #0f766e;
}

* { box-sizing: border-box; }

body {
  margin: 0;
  height: 100vh;
  display: flex;
  flex-direction: column;
  overflow: hidden;
  background: var(--chrome);
  color: var(--text);
  font: 9px/12px "Noto Sans", sans-serif;
}

.sprite { display: none; }
.glyph { font-family: "Noto Sans", sans-serif; }

button, input {
  margin: 0;
  padding: 0;
  border: 0;
  background: none;
  color: inherit;
  font: inherit;
}

button {
  display: flex;
  flex: none;
  align-items: center;
  justify-content: center;
}

svg { display: block; width: 16px; height: 16px; }

/* Menu */
.menubar {
  display: flex;
  align-items: center;
  flex: none;
  height: 17px;
  padding: 1px 6px 0;
  gap: 11px;
  border-bottom: 1px solid var(--line);
}
.close { margin-left: auto; font-size: 9px; }

/* Toolbars */
.toolbar {
  display: flex;
  align-items: center;
  flex: none;
  height: 27px;
  padding-left: 2px;
}
.toolbar > button { width: 22px; height: 24px; border-radius: 3px; }
.toolbar > .on { background: #d5d1cd; }
.toolbar > .drop, .drop { width: 7px; height: 24px; }
.drop::after, .combo button::after {
  content: "";
  border: 3px solid transparent;
  border-top-color: #222;
  border-bottom: 0;
}
.drop.off::after { border-top-color: #b5b5b5; }
.sep {
  flex: none;
  width: 5px;
  height: 22px;
  background: linear-gradient(var(--line), var(--line)) center / 1px 100% no-repeat;
}
.format .sep { width: 5px; }
.toolbar .sep.wide { width: 7px; }

.combo {
  display: flex;
  flex: none;
  height: 24px;
  border: 1px solid #cfccc8;
  border-radius: 3px;
  background: #fff;
  overflow: hidden;
}
.combo input { flex: 1; min-width: 0; padding-left: 6px; color: #222; }
.combo button { width: 23px; border-left: 1px solid #d8d5d1; background: #f6f5f4; }
.combo button::after { border-width: 4px 4px 0; }
.font { width: 137px; margin-right: 7px; }
.font input { font-style: italic; }
.size { width: 67px; }
.name { width: 108px; }

.bold { font-size: 13px; font-weight: 700; }
.italic { font: italic 14px "Liberation Serif", serif; }
.under { font-size: 13px; }
.under span { line-height: 12px; border-bottom: 2px solid #4a9bd8; }

/* Work area */
.work { display: flex; flex: 1; min-height: 0; }
.document { display: flex; flex-direction: column; flex: 1; min-width: 0; border-right: 1px solid #cdcac6; }

.formula {
  display: flex;
  align-items: center;
  flex: none;
  height: 29px;
  padding: 0 5px 3px 2px;
}
.fx {
  width: 18px;
  color: #2f88d0;
  font: italic 14px "Liberation Serif", serif;
}
.narrow { width: 14px; }
.narrow + .drop { margin-right: 3px; }
.narrow svg { width: 14px; height: 14px; }
.content {
  flex: 1;
  min-width: 0;
  height: 17px;
  margin: 0 3px 0 1px;
  padding-left: 4px;
  border: 1px solid #d4d2ce;
  background: #fff;
}
.expand::after { border-width: 4px 4px 0; }

.viewport { display: flex; flex: 1; min-height: 0; }
.cells { flex: 1; min-width: 0; overflow: hidden; background: #fff; }

table {
  width: 100%;
  table-layout: fixed;
  border-collapse: separate;
  border-spacing: 0;
}
.c-num { width: 22px; }
.c-a { width: 134px; }
.c-b { width: 262px; }
.c-c { width: 182px; }
.c-end { width: 17px; }

th {
  height: 14px;
  padding: 0;
  border-right: 1px solid #b9b8b6;
  border-bottom: 1px solid #b9b8b6;
  background: #dfdedc;
  font-weight: 400;
  line-height: 12px;
}
thead th { border-top: 1px solid #b9b8b6; }
th.sel { border-color: #2f76cc; background: var(--blue); color: #fff; font-weight: 700; }
th.corner { border-color: var(--chrome); background: var(--chrome); }

td {
  padding: 0;
  white-space: nowrap;
  font-family: Lato, "DejaVu Sans", sans-serif;
}
.blank { background: #fff; }

/* Spelling marks */
u {
  padding-bottom: 1px;
  text-decoration: none;
  background: url("data:image/svg+xml,%3Csvg xmlns='http://www.w3.org/2000/svg' width='4' height='3'%3E%3Cpath d='M0 .7L2 2.300L4 .7' fill='none' stroke='%23dc3c38' stroke-width='.9'/%3E%3C/svg%3E") left bottom / 4px 3px repeat-x;
}

.r1 { height: 34px; }
.r2 { height: 19px; }
.r3 { height: 17px; }
.r4 { height: 15px; }
.row { height: 73px; }

.title {
  position: relative;
  padding-bottom: 3px;
  border: 1px solid var(--blue);
  border-bottom-width: 2px;
  border-left: 0;
  background: #e6f6f2;
  color: var(--teal);
  font-size: 13px;
  font-weight: 700;
}
.handle {
  position: absolute;
  right: -2px;
  bottom: -3px;
  width: 4px;
  height: 4px;
  background: var(--blue);
}
.subtitle { color: #4b5563; font-size: 10px; font-style: italic; }
.dated { color: #9ca3af; font-size: 8px; font-style: italic; }

.r4 td {
  border-right: 1px solid #c5dcd9;
  background: var(--teal);
  color: #fff;
  font-size: 9px;
  font-weight: 700;
  line-height: 12px;
  text-align: center;
}

.row td { border-right: 1px solid #d5d9dc; border-bottom: 1px solid #d5d9dc; }
.tint td { background: #eefdfa; }
.row .label { color: #0d8a7c; font-size: 8px; font-weight: 700; }
.desc { color: #111; font-size: 8px; line-height: 9px; vertical-align: top; }
.desc b { font: 7px/8px "DejaVu Sans", sans-serif; }
.row .note { padding-left: 1px; color: #5f6b73; font-size: 8px; font-style: italic; line-height: 8px; vertical-align: top; }

/* Scroll bars */
.vscroll { width: 9px; padding: 5px 1px 0 2px; border-top: 1px solid #444; background: #cdcdcd; }
.vscroll span { display: block; height: 42%; border-radius: 3px; background: #7d7f7e; }
.hscroll { flex: none; height: 10px; margin-right: 9px; padding: 2px 2px 0; border-right: 1px solid #555; background: #cdcdcd; }
.hscroll span { display: block; width: 47%; height: 6px; border-radius: 3px; background: #7d7f7e; }

/* Sheet tabs */
.tabs { display: flex; flex: none; height: 16px; padding-left: 5px; font-size: 8px; }
.tabnav { display: flex; align-items: center; width: 71px; }
.tabnav svg { width: 15px; height: 14px; }
.add { width: 16px; }
.tab { padding: 0 9px; }
.tab.active { padding: 0 8px; border-bottom: 2px solid #8a8a8a; background: #fff; color: #222; font-weight: 700; }
.tab:not(.active) { background: linear-gradient(#bbb, #bbb) right center / 1px 8px no-repeat; }

/* Sidebar */
.sidebar {
  position: relative;
  display: flex;
  flex-direction: column;
  align-items: center;
  flex: none;
  gap: 13px;
  width: 38px;
  padding: 7px 0 0 1px;
}
.sidebar .fx { width: 20px; height: 16px; font-size: 17px; }
.grip {
  position: absolute;
  top: 50%;
  left: -1px;
  width: 5px;
  height: 50px;
  margin-top: -26px;
  background: #8f8f8f;
}
.grip::after { content: ""; border: 2px solid transparent; border-left-color: #fff; border-right: 0; }

/* Status bar */
.status {
  display: grid;
  grid-template-columns: 22px 159fr 220fr 197fr 170fr 46fr 31fr 20fr 20fr 186fr 96px 33px;
  flex: none;
  height: 17px;
  border-top: 1px solid var(--line);
  font-size: 8px;
}
.status > span {
  display: flex;
  align-items: center;
  padding-left: 5px;
  border-right: 1px solid #e3e1de;
}
.status > span:first-child, .status > span:last-child { border-right: 0; }
.status .mid { justify-content: center; padding: 0; }
.disk svg { width: 13px; height: 13px; }
.mode svg { width: 22px; height: 12px; }
.status .zoom { gap: 3px; padding: 0 4px; }
.zoom button { width: 10px; font-size: 13px; font-weight: 700; }
.zoom input { flex: 1; min-width: 0; height: 12px; appearance: none; }
.zoom input::-webkit-slider-runnable-track { height: 1px; background: #888; }
.zoom input::-webkit-slider-thumb { appearance: none; width: 3px; height: 7px; margin-top: -3px; border: 1px solid #444; background: #ddd; }
```
